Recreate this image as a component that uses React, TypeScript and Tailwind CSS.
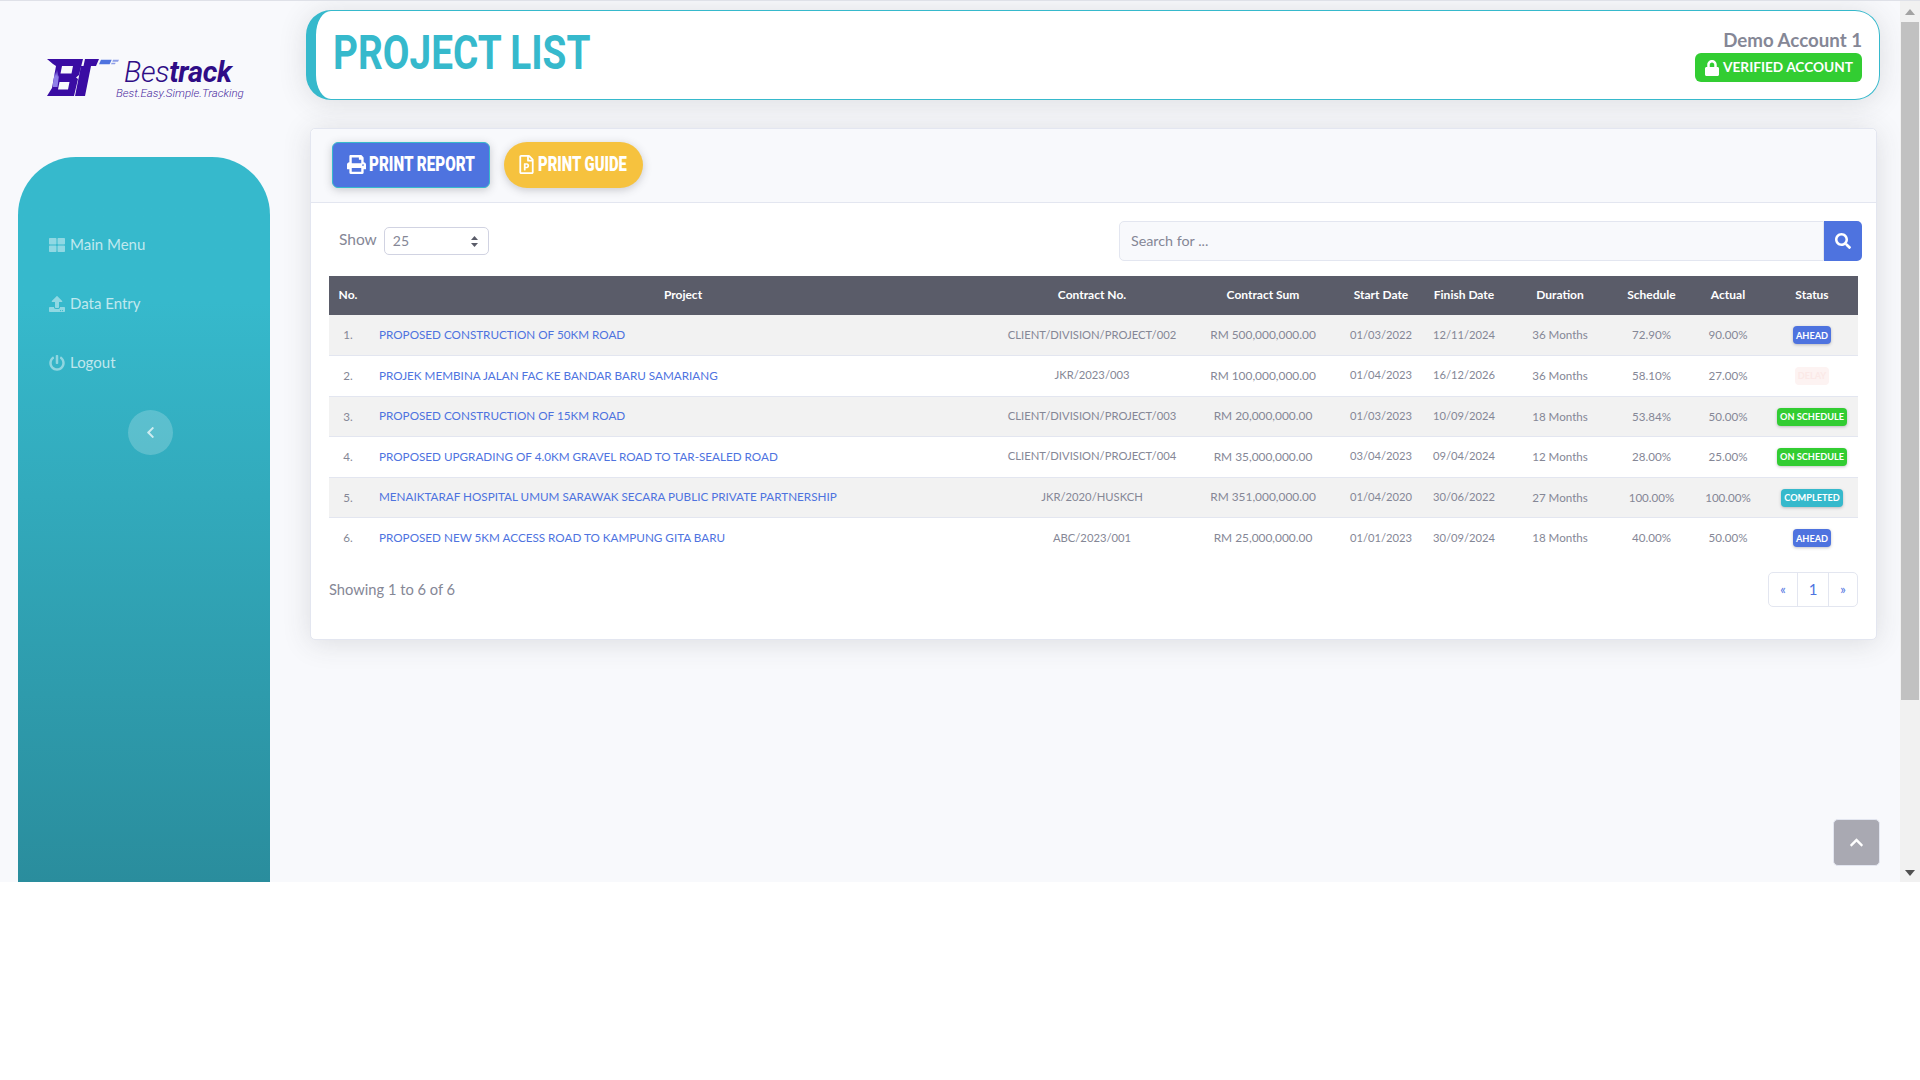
import { FaPrint, FaRegFilePowerpoint, FaLock, FaSearch, FaChevronLeft, FaChevronUp, FaUpload, FaPowerOff, FaThLarge } from "react-icons/fa";

const rows = [
  ["PROPOSED CONSTRUCTION OF 50KM ROAD", "CLIENT/DIVISION/PROJECT/002", "RM 500,000,000.00", "01/03/2022", "12/11/2024", "36 Months", "72.90%", "90.00%", "AHEAD"],
  ["PROJEK MEMBINA JALAN FAC KE BANDAR BARU SAMARIANG", "JKR/2023/003", "RM 100,000,000.00", "01/04/2023", "16/12/2026", "36 Months", "58.10%", "27.00%", "DELAY"],
  ["PROPOSED CONSTRUCTION OF 15KM ROAD", "CLIENT/DIVISION/PROJECT/003", "RM 20,000,000.00", "01/03/2023", "10/09/2024", "18 Months", "53.84%", "50.00%", "ON SCHEDULE"],
  ["PROPOSED UPGRADING OF 4.0KM GRAVEL ROAD TO TAR-SEALED ROAD", "CLIENT/DIVISION/PROJECT/004", "RM 35,000,000.00", "03/04/2023", "09/04/2024", "12 Months", "28.00%", "25.00%", "ON SCHEDULE"],
  ["MENAIKTARAF HOSPITAL UMUM SARAWAK SECARA PUBLIC PRIVATE PARTNERSHIP", "JKR/2020/HUSKCH", "RM 351,000,000.00", "01/04/2020", "30/06/2022", "27 Months", "100.00%", "100.00%", "COMPLETED"],
  ["PROPOSED NEW 5KM ACCESS ROAD TO KAMPUNG GITA BARU", "ABC/2023/001", "RM 25,000,000.00", "01/01/2023", "30/09/2024", "18 Months", "40.00%", "50.00%", "AHEAD"],
];

const badgeClass: Record<string, string> = {
  AHEAD: "bg-[#4e73df] text-white",
  DELAY: "bg-[#fdf3f2] text-[#fbe9e7]",
  "ON SCHEDULE": "bg-[#32cd32] text-white",
  COMPLETED: "bg-[#36b9cc] text-white",
};

const colText = ["text-[11.25px]", "text-[11.9px]", "text-[11.2px]", "text-[11.2px]", "text-[11.6px]", "text-[11.6px]", "text-[11.6px]"];

const heads = ["No.", "Project", "Contract No.", "Contract Sum", "Start Date", "Finish Date", "Duration", "Schedule", "Actual", "Status"];

function Logo() {
  return (
    <div className="flex items-start h-[40px] ml-[29px] mt-[58px]">
      <svg width="52" height="37" viewBox="0 0 52 37" className="shrink-0">
        <path fill="#3a0ca3" fillRule="evenodd" d="M0 0 H36 L32 16 L29 18.5 L31 20 L27 37 H0 L5 29 L9 7 L6 5 Z M15 7 H26 L24.5 14.5 H13.5 Z M12.5 23 H22.5 L21 30.5 H11 Z" />
        <path fill="#3a0ca3" d="M38 0 H52 L49 7 H44 L38 37 H28 L34 7 H36.5 Z" />
        <path fill="#8f7fe8" d="M6 24 L8 13 L9 17 L10 11 L11 18 L12 16 L10.5 28 H6 Z" />
      </svg>
      <svg width="20" height="8" viewBox="0 0 60 24" className="shrink-0">
        <path fill="#4e73df" d="M6 2 H38 L32 16 H0 Z" />
        <path fill="#8d9ee8" d="M42 2 H60 L57 8 H40 Z M38 11 H50 L48 16 H36 Z" />
      </svg>
      <div className="italic text-[#2f0d86] [font-family:Roboto,sans-serif] relative ml-[5px]">
        <div className="text-[29px] leading-[26px] font-light tracking-[-0.3px] whitespace-nowrap">Bes<span className="font-bold">track</span></div>
        <div className="absolute left-[-8px] top-[28px] text-[11.5px] leading-[12px] font-light text-[#4a2a9e] whitespace-nowrap">Best.Easy.Simple.Tracking</div>
      </div>
    </div>
  );
}

function Nav({ icon, label }: { icon: React.ReactNode; label: string }) {
  return (
    <div className="flex items-center h-[59px] pl-[31px] text-white/70 text-[15px]">
      <span className="w-[21px] text-[16px] text-white/45 flex">{icon}</span>
      <span>{label}</span>
    </div>
  );
}

export default function App() {
  return (
    <div className="relative flex h-[882px] overflow-hidden border-t border-[#dfe1e8] bg-[#f8f9fc] text-[#858796] [font-family:Lato,'Noto_Sans',sans-serif]">
      <aside className="w-[306px] shrink-0 flex flex-col pl-[18px] pr-[36px]">
        <Logo />
        <div className="mt-[58px] flex-1 rounded-t-[58px] bg-gradient-to-b from-[#36b9cc] from-[20%] to-[#2a8d9d] pt-[58px]">
          <Nav icon={<FaThLarge />} label="Main Menu" />
          <Nav icon={<FaUpload />} label="Data Entry" />
          <Nav icon={<FaPowerOff />} label="Logout" />
          <div className="mt-[18px] ml-[110px] flex h-[45px] w-[45px] items-center justify-center rounded-full bg-white/20 text-white/70 text-[13px]">
            <FaChevronLeft />
          </div>
        </div>
      </aside>

      <main className="flex-1 min-w-0 pt-[9px] pr-[20px]">
        <header className="flex h-[90px] items-center justify-between rounded-[25px] border border-l-[10px] border-[#36b9cc] bg-white pl-[17px] pr-[17px] shadow-[0_3px_28px_rgba(58,59,69,0.15)]">
          <h1 className="w-[255px] origin-left scale-x-[0.807] whitespace-nowrap text-[48px] font-bold leading-none text-[#36b9cc] mb-[4px] [font-family:Roboto,sans-serif]">PROJECT LIST</h1>
          <div className="flex flex-col items-end">
            <div className="text-[18.7px] leading-[24px] font-bold mb-[1px]">Demo Account 1</div>
            <div className="flex h-[29px] w-[167px] items-center justify-center gap-[3px] rounded-[6px] bg-[#32cd32] text-[13.7px] font-bold text-white">
              <FaLock className="text-[16px]" /> VERIFIED ACCOUNT
            </div>
          </div>
        </header>

        <section className="ml-[4px] mr-[3px] mt-[28px] h-[512px] rounded-[5px] border border-[#e3e6f0] bg-white shadow-[0_3px_28px_rgba(58,59,69,0.15)]">
          <div className="flex h-[74px] items-center gap-[14px] border-b border-[#e3e6f0] bg-[#f8f9fc] pl-[21px] pb-[2px] rounded-t-[5px]">
            <button className="flex h-[46px] w-[158px] items-center gap-[3px] pl-[14px] rounded-[6px] border border-[#36b9cc] bg-[#4e73df] text-[19.5px] font-black text-white shadow-[0_2px_8px_rgba(58,59,69,0.25)] [font-family:Roboto,sans-serif]">
              <FaPrint className="text-[19px] shrink-0" />
              <span className="inline-block w-[105px] origin-left scale-x-[0.78] whitespace-nowrap text-left">PRINT REPORT</span>
            </button>
            <button className="flex h-[46px] w-[139px] items-center gap-[2px] pl-[13px] rounded-full bg-[#f6c23e] text-[19.5px] font-black text-white shadow-[0_2px_8px_rgba(58,59,69,0.25)] [font-family:Roboto,sans-serif]">
              <FaRegFilePowerpoint className="text-[19px] shrink-0" />
              <span className="inline-block w-[90px] origin-left scale-x-[0.76] whitespace-nowrap text-left">PRINT GUIDE</span>
            </button>
          </div>

          <div className="flex items-center justify-between pl-[28px] pr-[14px] pt-[18px]">
            <div className="flex items-center gap-[7px] text-[15.5px]">
              <span className="-mt-[3px]">Show</span>
              <div className="flex h-[28px] w-[105px] items-center justify-between rounded-[5px] border border-[#d1d3e2] bg-white pl-[8px] pr-[10px] text-[14px]">
                <span className="-mt-[2px]">25</span>
                <svg width="7" height="11" viewBox="0 0 7 11"><path fill="#5a5c69" d="M3.5 0 L7 4 H0 Z M3.5 11 L0 7 H7 Z" /></svg>
              </div>
            </div>
            <div className="flex h-[40px]">
              <div className="flex w-[705px] items-center rounded-l-[5px] border border-[#e3e6f0] bg-[#f8f9fc] pl-[11px] text-[14.3px]">Search for ...</div>
              <div className="flex w-[38px] items-center justify-center rounded-r-[5px] bg-[#4e73df] text-[16px] text-white"><FaSearch /></div>
            </div>
          </div>

          <div className="pl-[18px] pr-[14px] pt-[15px]">
            <table className="w-[1529px] table-fixed border-collapse text-[11.6px]">
              <colgroup>
                <col className="w-[38px]" /><col className="w-[632px]" /><col className="w-[186px]" /><col className="w-[156px]" /><col className="w-[80px]" /><col className="w-[86px]" /><col className="w-[106px]" /><col className="w-[77px]" /><col className="w-[76px]" /><col className="w-[92px]" />
              </colgroup>
              <thead>
                <tr className="h-[39px] bg-[#5a5c69] text-white text-[12px]">
                  {heads.map((h) => <th key={h} className="font-bold text-center pb-[1px]">{h}</th>)}
                </tr>
              </thead>
              <tbody>
                {rows.map((r, i) => (
                  <tr key={i} className={`h-[40.5px] border-b border-[#e3e6f0] last:border-b-0 ${i % 2 === 0 ? "bg-[#f2f2f2]" : "bg-white"}`}>
                    <td className="text-center">{i + 1}.</td>
                    <td className="pl-[12px] text-[11.7px] text-[#4e73df] whitespace-nowrap">{r[0]}</td>
                    {r.slice(1, 8).map((c, j) => <td key={j} className={`text-center whitespace-nowrap ${colText[j]}`}>{c}</td>)}
                    <td className="text-center">
                      <span className={`inline-flex h-[18px] items-center rounded-[4px] px-[3px] text-[9.2px] font-bold leading-none ${r[8] === "DELAY" ? "" : "shadow-[0_1px_3px_rgba(58,59,69,0.3)]"} ${badgeClass[r[8]]}`}>{r[8]}</span>
                    </td>
                  </tr>
                ))}
              </tbody>
            </table>
            <div className="mt-[14px] flex items-center justify-between w-[1529px]">
              <span className="text-[14.7px]">Showing 1 to 6 of 6</span>
              <div className="flex h-[35px] w-[90px] rounded-[5px] border border-[#e3e6f0] text-[#4e73df] bg-white">
                <span className="flex w-[29px] items-center justify-center border-r border-[#e3e6f0] text-[13px]">«</span>
                <span className="flex w-[31px] items-center justify-center border-r border-[#e3e6f0] text-[15px]">1</span>
                <span className="flex flex-1 items-center justify-center text-[13px]">»</span>
              </div>
            </div>
          </div>
        </section>
      </main>

      <div className="flex w-[20px] shrink-0 flex-col bg-[#f1f1f1]">
        <div className="flex h-[21px] items-center justify-center">
          <svg width="10" height="6" viewBox="0 0 10 6"><path fill="#a3a3a3" d="M5 0 L10 6 H0 Z" /></svg>
        </div>
        <div className="mx-[1px] h-[678px] bg-[#c1c1c1]" />
        <div className="flex flex-1 items-end justify-center pb-[6px]">
          <svg width="10" height="6" viewBox="0 0 10 6"><path fill="#505050" d="M5 6 L0 0 H10 Z" /></svg>
        </div>
      </div>

      <div className="absolute left-[1833px] top-[818px] flex h-[47px] w-[47px] items-center justify-center rounded-[5px] border border-[#e3e6f0] bg-[#a9a9b2] text-[15px] text-white">
        <FaChevronUp />
      </div>
    </div>
  );
}
